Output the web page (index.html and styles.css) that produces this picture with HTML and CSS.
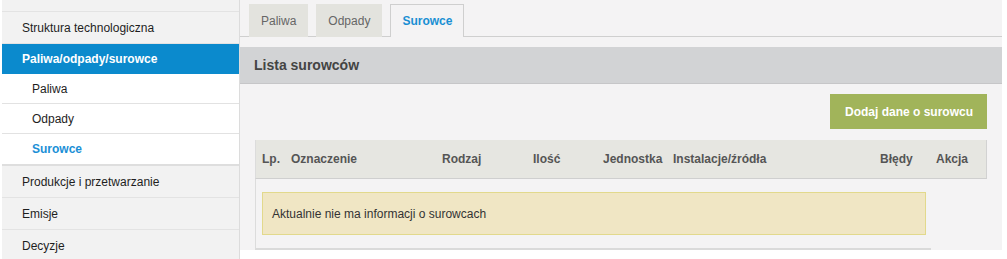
FILE: index.html
```html
<!DOCTYPE html>
<html lang="pl">
<head>
<meta charset="utf-8">
<title>Lista surowców</title>
<link rel="stylesheet" href="styles.css">
</head>
<body>
<div class="page">
  <nav class="sidebar">
    <div class="item item-cut"></div>
    <div class="item">Struktura technologiczna</div>
    <div class="item item-active">Paliwa/odpady/surowce</div>
    <div class="sub">Paliwa</div>
    <div class="sub">Odpady</div>
    <div class="sub sub-active sub-last">Surowce</div>
    <div class="item">Produkcje i przetwarzanie</div>
    <div class="item">Emisje</div>
    <div class="item item-last">Decyzje</div>
  </nav>
  <main class="main">
    <div class="tabs">
      <div class="tab">Paliwa</div>
      <div class="tab">Odpady</div>
      <div class="tab tab-active">Surowce</div>
    </div>
    <h2 class="title">Lista surowców</h2>
    <div class="actions">
      <button class="btn">Dodaj dane o surowcu</button>
    </div>
    <div class="table">
      <div class="thead">
        <span>Lp.</span>
        <span>Oznaczenie</span>
        <span>Rodzaj</span>
        <span>Ilość</span>
        <span>Jednostka</span>
        <span>Instalacje/źródła</span>
        <span>Błędy</span>
        <span>Akcja</span>
      </div>
      <div class="tbody">
        <div class="notice">Aktualnie nie ma informacji o surowcach</div>
      </div>
    </div>
  </main>
</div>
</body>
</html>
```

FILE: styles.css
```css
* { box-sizing: border-box; }
html, body { margin: 0; padding: 0; background: #fff; }
body {
  font-family: "Liberation Sans", Arial, sans-serif;
  font-size: 12px;
  color: #222;
  height: 259px;
  overflow: hidden;
}
.page {
  display: flex;
  align-items: flex-start;
  width: 1002px;
}
.sidebar {
  margin-left: 2px;
  width: 238px;
  border-right: 1px solid #dcdcdc;
  background: #f2f2f2;
  display: flex;
  flex-direction: column;
  height: 259px;
}
.item {
  height: 32px;
  border-bottom: 1px solid #e3e3e3;
  padding-left: 20px;
  display: flex;
  align-items: center;
  color: #1e1e1e;
  background: #f2f2f2;
  flex-shrink: 0;
}
.item-cut { height: 12px; }
.item-last { height: 33px; }
.item-active {
  height: 30px;
  border-bottom: none;
  background: #0b8acd;
  color: #fff;
  font-weight: bold;
}
.sub {
  height: 30px;
  border-bottom: 1px solid #e2e2e2;
  padding-left: 30px;
  display: flex;
  align-items: center;
  background: #fff;
  color: #1e1e1e;
  flex-shrink: 0;
}
.sub-active { color: #1b8fd6; font-weight: bold; }
.sub-last { height: 32px; border-bottom: 2px solid #dedede; }
.main {
  width: 762px;
  background: #f4f3f4;
  display: flex;
  flex-direction: column;
}
.tabs {
  display: flex;
  gap: 8px;
  padding: 4px 0 0 9px;
  border-bottom: 1px solid #cfcfcf;
  height: 37px;
}
.tab {
  height: 33px;
  padding: 0 11px;
  display: flex;
  align-items: center;
  background: #e3e3de;
  color: #666;
  border: 1px solid #e3e3de;
  border-bottom: none;
}
.tab-active {
  background: #f4f3f4;
  border-color: #cfcfcf;
  color: #1a8fd3;
  font-weight: bold;
  margin-bottom: -1px;
  height: 33px;
}
.title {
  margin: 10px 0 0;
  height: 37px;
  padding-left: 14px;
  background: #d2d3d5;
  border-bottom: 1px solid #c6c6c8;
  font-size: 14px;
  font-weight: bold;
  color: #444;
  display: flex;
  align-items: center;
}
.actions {
  display: flex;
  justify-content: flex-end;
  padding: 10px 15px 0 0;
}
.btn {
  height: 35px;
  padding: 0 14px 0 15px;
  border: none;
  background: #a1b45a;
  color: #fff;
  font-family: "Liberation Sans", Arial, sans-serif;
  font-size: 12px;
  font-weight: bold;
}
.table {
  margin: 11px 0 0 15px;
  width: 732px;
}
.thead {
  display: grid;
  grid-template-columns: 29px 151px 91px 70px 70px 207px 56px auto;
  align-items: center;
  height: 39px;
  padding-left: 6px;
  background: #e6e6e1;
  border-left: 1px solid #dcdcdc;
  border-right: 1px solid #d2d2d2;
  border-bottom: 1px solid #cfcfcf;
  font-weight: bold;
  color: #555;
}
.tbody {
  width: 676px;
  border-left: 1px solid #dcdcdc;
  border-bottom: 2px solid #dadada;
  padding: 13px 5px 13px 6px;
}
.notice {
  height: 43px;
  padding-left: 9px;
  display: flex;
  align-items: center;
  background: #f0e6c4;
  border: 1px solid #e2d98c;
  color: #333;
}
```
